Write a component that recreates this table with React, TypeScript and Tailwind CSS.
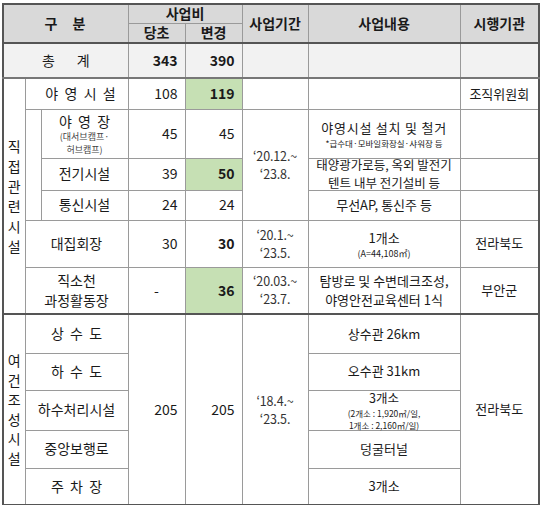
import React from 'react';

const cell = 'border border-[#9a9a9a] p-0 text-center align-middle';
const num = 'border border-[#9a9a9a] p-0 pr-[7px] text-right align-middle';
const green = 'border border-[#9a9a9a] p-0 pr-[7px] text-right align-middle bg-[#c6e0b4] font-bold';
const period = 'border border-[#9a9a9a] p-0 text-center align-middle text-[12.5px] leading-[18px] tracking-[-0.01em] text-[#333]';

const Vertical = ({ text, lh }: { text: string; lh: string }) => (
  <div className={`flex flex-col items-center ${lh}`}>
    {text.split('').map((c, i) => (
      <span key={i}>{c}</span>
    ))}
  </div>
);

export default function App() {
  return (
    <div
      className="w-[540px] h-[505px] bg-white text-[#1a1a1a] text-[14px] leading-tight pt-[3px] pl-[2px]"
      style={{ fontFamily: '"Noto Sans CJK KR", "Noto Sans", sans-serif' }}
    >
      <table className="table-fixed border-collapse w-[536px] border-2 border-[#555]">
        <colgroup>
          <col className="w-[22px]" />
          <col className="w-[16px]" />
          <col className="w-[87px]" />
          <col className="w-[57px]" />
          <col className="w-[57px]" />
          <col className="w-[66px]" />
          <col className="w-[152px]" />
          <col className="w-[79px]" />
        </colgroup>
        <thead className="bg-[#d9d9d9] font-bold">
          <tr className="h-[19px]">
            <th colSpan={3} rowSpan={2} className={cell}>
              <span className="tracking-[0.1em]">구&nbsp;&nbsp;&nbsp;분</span>
            </th>
            <th colSpan={2} className={cell}>사업비</th>
            <th rowSpan={2} className={cell}>사업기간</th>
            <th rowSpan={2} className={cell}>사업내용</th>
            <th rowSpan={2} className={cell}>시행기관</th>
          </tr>
          <tr className="h-[20px]">
            <th className={cell}>당초</th>
            <th className={cell}>변경</th>
          </tr>
        </thead>
        <tbody>
          <tr className="h-[35px] bg-[#f2f2f2] border-t-2 border-[#555]">
            <td colSpan={3} className={cell}>총&nbsp;&nbsp;&nbsp;&nbsp;&nbsp;&nbsp;&nbsp;계</td>
            <td className={`${num} font-bold`}>343</td>
            <td className={`${num} font-bold`}>390</td>
            <td className={cell}></td>
            <td className={cell}></td>
            <td className={cell}></td>
          </tr>
          <tr className="h-[31px] border-t-2 border-t-[#777]">
            <td rowSpan={6} className={cell}>
              <Vertical text="직접관련시설" lh="leading-[20px]" />
            </td>
            <td colSpan={2} className={`${cell} pl-[8px]`}>야&nbsp;&nbsp;영&nbsp;&nbsp;시&nbsp;&nbsp;설</td>
            <td className={num}>108</td>
            <td className={green}>119</td>
            <td className={cell}></td>
            <td className={cell}></td>
            <td className={`${cell} text-[13px]`}>조직위원회</td>
          </tr>
          <tr className="h-[49px]">
            <td rowSpan={3} className={cell}></td>
            <td className={cell}>
              <div className="leading-[18px]">야&nbsp;&nbsp;영&nbsp;&nbsp;장</div>
              <div className="text-[9px] leading-[13px] text-[#444]">(대서브캠프·<br />허브캠프)</div>
            </td>
            <td className={num}>45</td>
            <td className={num}>45</td>
            <td rowSpan={3} className={period}>
              ‘20.12.~<br />‘23.8.
            </td>
            <td className={`${cell} text-[13px]`}>
              <div className="tracking-[0.06em] leading-[19px]">야영시설 설치 및 철거</div>
              <div className="text-[8.5px] leading-[12.5px]">*급수대·모바일화장실·샤워장 등</div>
            </td>
            <td className={cell}></td>
          </tr>
          <tr className="h-[31px]">
            <td className={cell}>전기시설</td>
            <td className={num}>39</td>
            <td className={green}>50</td>
            <td className={`${cell} text-[12.5px]`}>
              <div className="leading-[18.5px] -my-[3px]">
                태양광가로등, 옥외 발전기<br />텐트 내부 전기설비 등
              </div>
            </td>
            <td className={cell}></td>
          </tr>
          <tr className="h-[30px]">
            <td className={cell}>통신시설</td>
            <td className={num}>24</td>
            <td className={num}>24</td>
            <td className={`${cell} text-[13px]`}>무선AP, 통신주 등</td>
            <td className={cell}></td>
          </tr>
          <tr className="h-[47px]">
            <td colSpan={2} className={cell}>대집회장</td>
            <td className={num}>30</td>
            <td className={`${num} font-bold`}>30</td>
            <td className={period}>
              ‘20.1.~<br />‘23.5.
            </td>
            <td className={`${cell} text-[13px]`}>
              <div className="leading-[19px]">1개소</div>
              <div className="text-[9px] leading-[13px]">(A=44,108㎡)</div>
            </td>
            <td className={`${cell} text-[13px]`}>전라북도</td>
          </tr>
          <tr className="h-[47px]">
            <td colSpan={2} className={`${cell} leading-[20px]`}>
              직소천<br />과정활동장
            </td>
            <td className={cell}>-</td>
            <td className={green}>36</td>
            <td className={period}>
              ‘20.03.~<br />‘23.7.
            </td>
            <td className={`${cell} text-[13px] leading-[19px]`}>
              탐방로 및 수변데크조성,<br />야영안전교육센터 1식
            </td>
            <td className={`${cell} text-[13px]`}>부안군</td>
          </tr>
          <tr className="h-[39px] border-t-2 border-t-[#555]">
            <td rowSpan={5} className={cell}>
              <Vertical text="여건조성시설" lh="leading-[19.5px]" />
            </td>
            <td colSpan={2} className={cell}>상&nbsp;&nbsp;수&nbsp;&nbsp;도</td>
            <td rowSpan={5} className={num}>205</td>
            <td rowSpan={5} className={num}>205</td>
            <td rowSpan={5} className={period}>
              ‘18.4.~<br />‘23.5.
            </td>
            <td className={`${cell} text-[13px]`}>상수관 26km</td>
            <td rowSpan={5} className={`${cell} text-[13px]`}>전라북도</td>
          </tr>
          <tr className="h-[37px]">
            <td colSpan={2} className={cell}>하&nbsp;&nbsp;수&nbsp;&nbsp;도</td>
            <td className={`${cell} text-[13px]`}>오수관 31km</td>
          </tr>
          <tr className="h-[38px]">
            <td colSpan={2} className={cell}>하수처리시설</td>
            <td className={`${cell} text-[12.5px]`}>
              <div className="-my-[2px]">
                <div className="leading-[18px]">3개소</div>
                <div className="text-[8.5px] leading-[12.5px]">
                  (2개소 : 1,920㎥/일,<br />1개소 : 2,160㎥/일)
                </div>
              </div>
            </td>
          </tr>
          <tr className="h-[38px]">
            <td colSpan={2} className={cell}>중앙보행로</td>
            <td className={`${cell} text-[13px]`}>덩굴터널</td>
          </tr>
          <tr className="h-[37px]">
            <td colSpan={2} className={cell}>주&nbsp;&nbsp;차&nbsp;&nbsp;장</td>
            <td className={`${cell} text-[13px]`}>3개소</td>
          </tr>
        </tbody>
      </table>
    </div>
  );
}
